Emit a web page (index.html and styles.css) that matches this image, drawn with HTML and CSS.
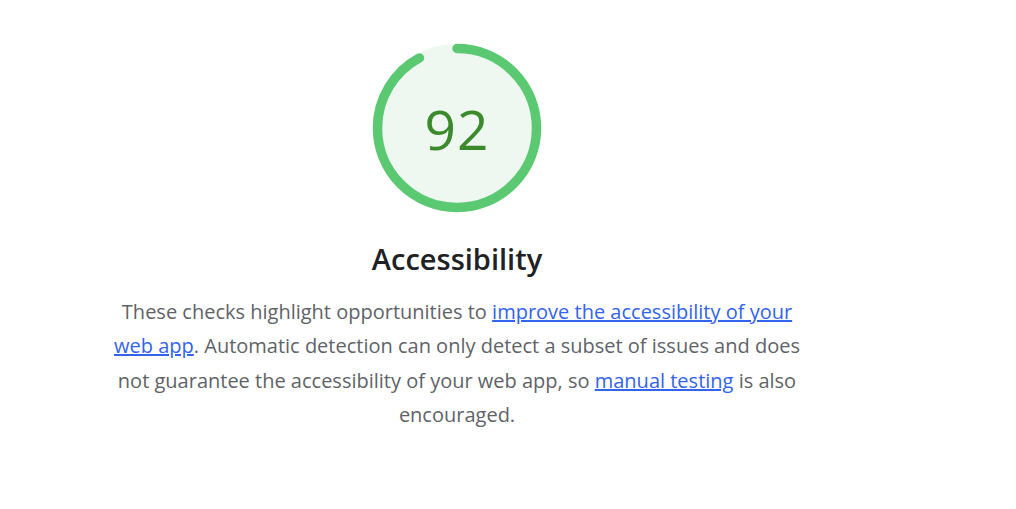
FILE: index.html
```html
<!DOCTYPE html>
<html lang="en">
<head>
<meta charset="utf-8">
<title>Accessibility</title>
<link rel="stylesheet" href="styles.css">
</head>
<body>
<main class="category">
  <div class="gauge">
    <svg class="gauge-svg" viewBox="0 0 170 170" width="170" height="170" aria-hidden="true">
      <circle class="gauge-base" cx="85" cy="85" r="84"></circle>
      <circle class="gauge-arc" cx="85" cy="85" r="79.5" transform="rotate(-90 85 85)" stroke-dasharray="459.6 500"></circle>
    </svg>
    <div class="gauge-score">92</div>
  </div>
  <h2 class="title">Accessibility</h2>
  <p class="description">These checks highlight opportunities to <a href="#">improve the accessibility of your web app</a>. Automatic detection can only detect a subset of issues and does not guarantee the accessibility of your web app, so <a href="#">manual testing</a> is also encouraged.</p>
</main>
</body>
</html>
```

FILE: styles.css
```css
html, body {
  margin: 0;
  padding: 0;
  background: #ffffff;
}

body {
  font-family: "Open Sans", "Noto Sans", sans-serif;
}

.category {
  width: 914px;
  display: flex;
  flex-direction: column;
  align-items: center;
  padding-top: 43px;
}

.gauge {
  position: relative;
  width: 170px;
  height: 170px;
}

.gauge-svg {
  display: block;
}

.gauge-base {
  fill: #eef8f1;
}

.gauge-arc {
  fill: none;
  stroke: #5bc972;
  stroke-width: 9.5;
  stroke-linecap: round;
}

.gauge-score {
  position: absolute;
  inset: 0;
  display: flex;
  align-items: center;
  justify-content: center;
  font-size: 55px;
  color: #3b8a2b;
  font-weight: 400;
  letter-spacing: 1px;
}

.title {
  margin: 28px 0 0;
  font-size: 29px;
  font-weight: 600;
  color: #202124;
  line-height: 36px;
}

.description {
  margin: 17.5px 0 0;
  width: 694px;
  text-align: center;
  font-size: 20px;
  line-height: 34.5px;
  color: #5f6368;
}

.description a {
  color: #3264f0;
  text-decoration: underline;
}
```
